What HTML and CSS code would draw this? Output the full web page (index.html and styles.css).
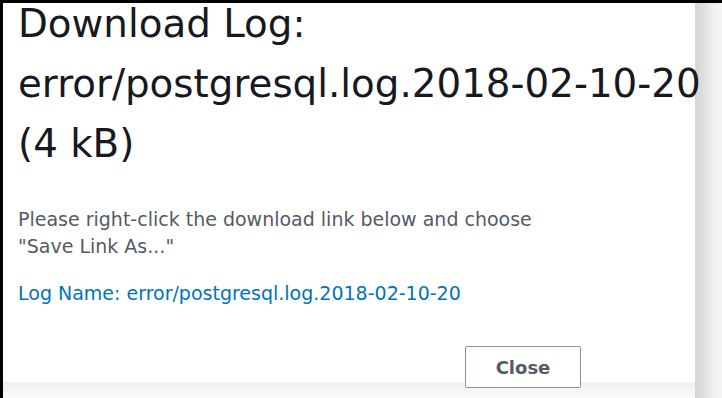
FILE: index.html
```html
<!DOCTYPE html>
<html>
<head>
<meta charset="utf-8">
<link rel="stylesheet" href="styles.css">
</head>
<body>
<div class="frame">
  <div class="dialog">
    <h1 class="title">Download Log: error/postgresql.log.2018-02-10-20 (4 kB)</h1>
    <p class="hint">Please right-click the download link below and choose<br>"Save Link As..."</p>
    <a class="log-link" href="#">Log Name: error/postgresql.log.2018-02-10-20</a>
    <div class="actions">
      <button class="btn">Close</button>
    </div>
  </div>
</div>
</body>
</html>
```
FILE: styles.css
```css
* { box-sizing: border-box; }
html, body { margin: 0; padding: 0; }
body {
  width: 722px;
  height: 398px;
  overflow: hidden;
  background: #fff;
  font-family: "DejaVu Sans", "Open Sans", sans-serif;
}
.frame {
  width: 722px;
  height: 398px;
  border-top: 3px solid #000;
  border-left: 3px solid #000;
  background:
    linear-gradient(to right, #d6d6d6 0, #dedede 8px, #ececec 16px, #f6f6f6 27px) right top / 27px 100% no-repeat,
    linear-gradient(to bottom, #f0f0f0 0, #f6f6f6 10px, #fbfbfb 16px) left bottom / 100% 16px no-repeat,
    #fff;
}
.dialog {
  width: 692px;
  padding: 0 0 0 15px;
  display: flex;
  flex-direction: column;
}
.title {
  margin: 0;
  font-weight: 400;
  font-size: 38.8px;
  line-height: 60px;
  color: #16191f;
  width: 692px;
  position: relative;
  top: -9px;
}
.hint {
  margin: 23px 0 0;
  font-size: 19px;
  line-height: 27px;
  color: #545b64;
}
.log-link {
  margin-top: 22px;
  font-size: 19px;
  line-height: 22px;
  color: #0073bb;
  text-decoration: none;
}
.actions {
  display: flex;
  justify-content: flex-end;
  margin-top: 42px;
  padding-right: 114px;
}
.btn {
  width: 116px;
  height: 42px;
  background: #fff;
  border: 1px solid #879596;
  border-radius: 2px;
  font-family: inherit;
  font-size: 18px;
  font-weight: 700;
  color: #545b64;
}
```
